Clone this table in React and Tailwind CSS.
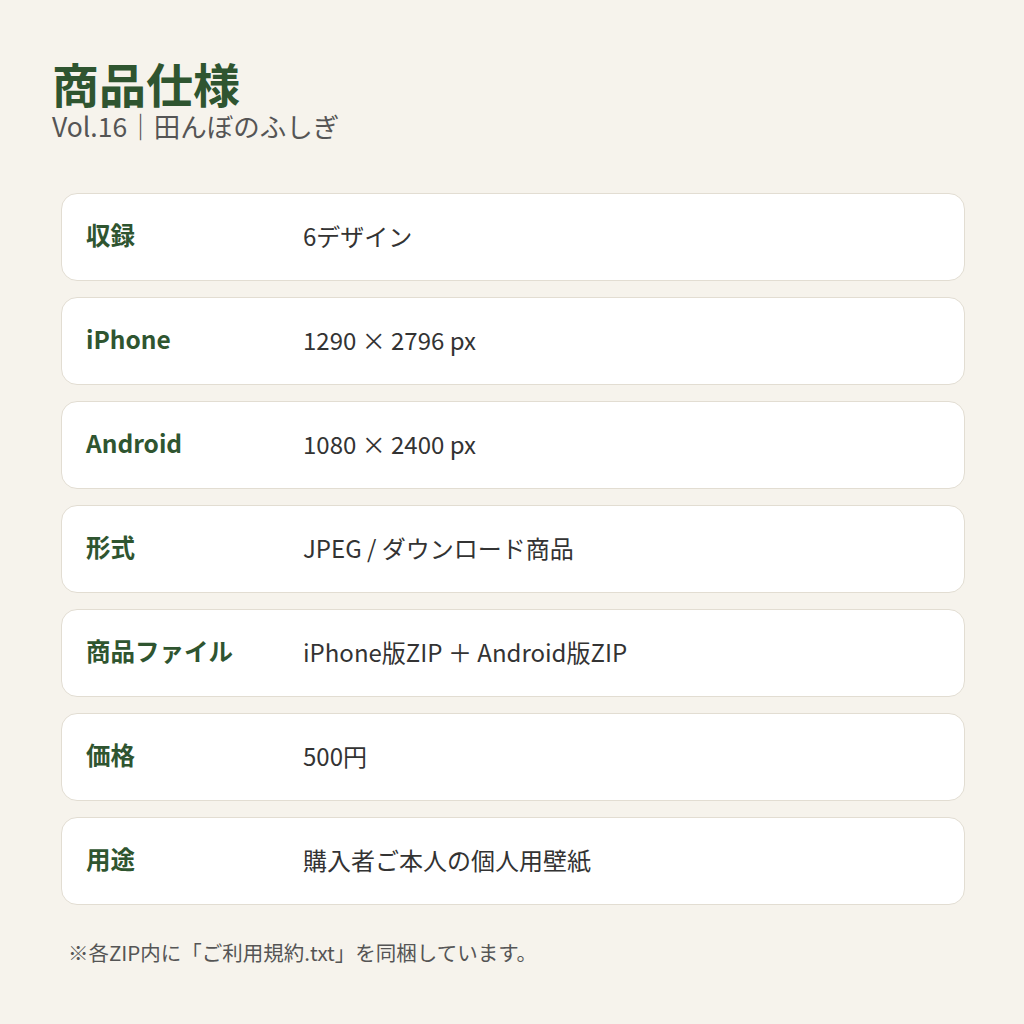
const font = { fontFamily: '"Noto Sans CJK JP", "Noto Sans", sans-serif' }

const specs = [
  ['収録', '6デザイン'],
  ['iPhone', '1290 × 2796 px'],
  ['Android', '1080 × 2400 px'],
  ['形式', 'JPEG / ダウンロード商品'],
  ['商品ファイル', 'iPhone版ZIP ＋ Android版ZIP'],
  ['価格', '500円'],
  ['用途', '購入者ご本人の個人用壁紙'],
]

export default function App() {
  return (
    <div style={font} className="w-[1024px] h-[1024px] bg-[#f6f3ec] pt-[55px]">
      <div className="pl-[52px]">
        <h1 className="text-[47px] leading-[56px] font-bold text-[#2f5530]">商品仕様</h1>
        <p className="text-[26.5px] leading-[30px] text-[#555] mt-0">Vol.16｜田んぼのふしぎ</p>
      </div>
      <div className="mt-[52px] ml-[61px] w-[904px] flex flex-col gap-4">
        {specs.map(([label, value]) => (
          <div
            key={label}
            className="h-[88px] flex items-center rounded-2xl bg-white border border-[#e2ddd2] pl-[24px] pb-[3px]"
          >
            <span className="w-[217px] text-[24.5px] font-bold text-[#2f5530]">{label}</span>
            <span className="text-[24px] text-[#333]">{value}</span>
          </div>
        ))}
      </div>
      <p className="mt-[32px] ml-[68px] text-[20.5px] text-[#555]">※各ZIP内に「ご利用規約.txt」を同梱しています。</p>
    </div>
  )
}
